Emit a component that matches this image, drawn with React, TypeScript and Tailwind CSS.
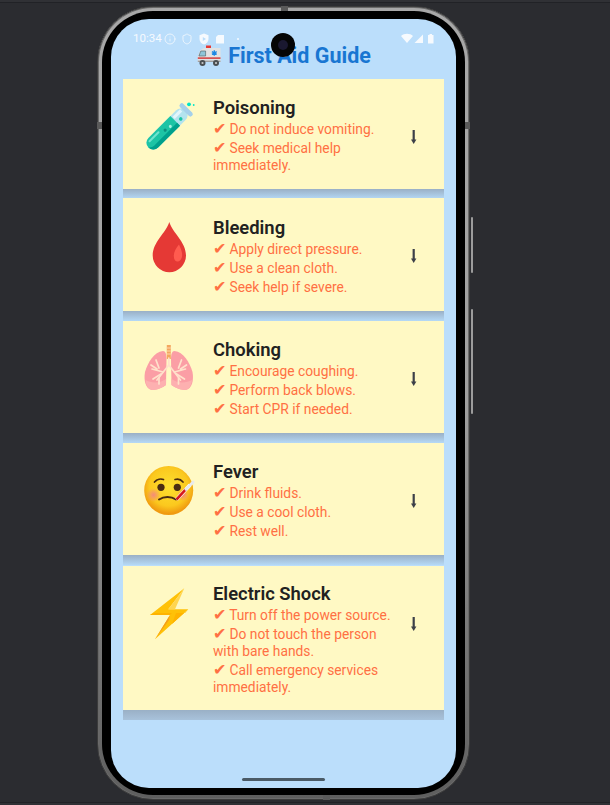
import { Info, Shield } from 'lucide-react'
import type { ReactNode } from 'react'

function TubeIcon() {
  return (
    <svg viewBox="0 0 60 60" className="h-[60px] w-[60px]">
      <circle cx="50" cy="7.3" r="1.9" fill="#00e5c8" />
      <circle cx="54.7" cy="8" r="0.9" fill="#00e5c8" />
      <g transform="translate(28 32) rotate(45) scale(1.05)">
        <rect x="-6.5" y="-25" width="13" height="50" rx="6.5" fill="#b3e3ee" />
        <path d="M-6.5 -11 H6.5 V18.5 A6.5 6.5 0 0 1 -6.5 18.5 Z" fill="#1cc4a5" />
        <path d="M2.6 -11 H6.5 V18.5 A6.5 6.5 0 0 1 0 25 A8 8 0 0 0 2.6 18 Z" fill="#00a08c" />
        <rect x="-4.5" y="7" width="2" height="14" rx="1" fill="#70e4cf" />
        <rect x="-4.5" y="-22" width="3" height="10" fill="#e3f5fa" />
        <rect x="-8" y="-28" width="16" height="4.5" rx="2.2" fill="#a5d0ea" />
        <circle cx="0.5" cy="-4" r="1.4" fill="#a4f0e0" />
        <circle cx="-0.5" cy="2" r="1.5" fill="#0d8f7f" />
        <circle cx="2.5" cy="-16" r="1.7" fill="#1cc4a5" />
      </g>
    </svg>
  )
}

function DropIcon() {
  return (
    <svg viewBox="0 0 60 60" className="h-[60px] w-[60px]">
      <path d="M30.3 6 C27 17 13.7 26 13.7 39.5 A16.6 16.6 0 0 0 47 39.5 C47 26 33.6 17 30.3 6 Z" fill="#e53935" />
      <path d="M40 28.5 C37 32 34.8 36 34.8 40 C34.8 44 37 46 39 45.5 C42 45 43.6 41 43 37 C42.6 34 41 31 40 28.5 Z" fill="#ff5b4f" />
    </svg>
  )
}

function LungsIcon() {
  return (
    <svg viewBox="0 0 60 60" className="h-[60px] w-[60px]">
      <path d="M24 12 C15 13 9 23 6 33 C4.5 41 6.5 50 13 51 C19 51 24 48 27 46 L27.5 20 C27.5 15 26.5 12 24 12 Z" fill="#fb9ea5" />
      <path d="M35.5 12 C44.5 13 50.5 23 53.5 33 C55 41 53 50 46.5 51 C40.5 51 35.5 48 32.5 46 L32 20 C32 15 33 12 35.5 12 Z" fill="#fb9ea5" />
      <path d="M6.5 41 C12 44 20 45 27 40 L27 46 C24 48 19 51 13 51 C9 50 7 46 6.5 41 Z" fill="#fdb0b0" />
      <path d="M53 41 C47.5 44 39.5 45 32.5 40 L32.5 46 C35.5 48 40.5 51 46.5 51 C50.5 50 52.5 46 53 41 Z" fill="#fdb0b0" />
      <rect x="27.8" y="6" width="4" height="14" fill="#f4a75e" />
      <path d="M27.8 9 h4 M27.8 12 h4 M27.8 15 h4" stroke="#ffd7ae" strokeWidth="1" />
      <g stroke="#ffe1cb" strokeWidth="1.7" strokeLinecap="round" fill="none">
        <path d="M29.8 19 V26 L18 41" />
        <path d="M29.8 26 L41.5 41" />
        <path d="M24 33 L13 30 M22 35 L14 40 M20 29 L17 21 M18 30 L12 26 M20 39 L20 45" />
        <path d="M35.5 33 L46.5 30 M37.5 35 L45.5 40 M39.5 29 L42.5 21 M41.5 30 L47.5 26 M39.5 39 L39.5 45" />
      </g>
    </svg>
  )
}

function FeverIcon() {
  return (
    <svg viewBox="0 0 60 60" className="h-[60px] w-[60px]">
      <defs>
        <radialGradient id="faceFill" cx="50%" cy="42%" r="55%">
          <stop offset="0%" stopColor="#fde030" />
          <stop offset="72%" stopColor="#fbc81e" />
          <stop offset="100%" stopColor="#f09a10" />
        </radialGradient>
        <radialGradient id="cheekFill">
          <stop offset="0%" stopColor="#f48a7c" />
          <stop offset="100%" stopColor="#f48a7c" stopOpacity="0" />
        </radialGradient>
      </defs>
      <circle cx="29.7" cy="29.5" r="24.5" fill="url(#faceFill)" />
      <circle cx="14.5" cy="34" r="7" fill="url(#cheekFill)" />
      <circle cx="44" cy="34" r="6" fill="url(#cheekFill)" />
      <circle cx="22" cy="26.3" r="3.6" fill="#4a2c12" />
      <circle cx="38.3" cy="26.3" r="3.6" fill="#4a2c12" />
      <path d="M15.5 21 C18 18 22 17.5 24.5 18.5 M36 18.5 C39 17.5 42 18.5 44 21" stroke="#4a2c12" strokeWidth="1.7" fill="none" strokeLinecap="round" />
      <path d="M20 38.5 C25 35 32 35 37 38.5" stroke="#4a2c12" strokeWidth="2" fill="none" strokeLinecap="round" />
      <path d="M37.5 38.5 L51 24" stroke="#fff" strokeWidth="3.6" />
      <path d="M37.5 38.5 L47 28.2" stroke="#d7191c" strokeWidth="2.6" />
      <path d="M47 28.2 L54 21.2" stroke="#e8eaec" strokeWidth="3" strokeLinecap="round" />
    </svg>
  )
}

function BoltIcon() {
  return (
    <svg viewBox="0 0 60 60" className="h-[60px] w-[60px]">
      <path d="M45.3 4.3 L11 31 H31 L16 55.3 L49.3 25.3 H29.3 Z" fill="#ffc107" />
      <path d="M45.3 4.3 L29.3 25.3 H36 Z" fill="#ffd54f" />
      <path d="M31 31 L16 55.3 L30 36 Z" fill="#f59d1c" />
      <path d="M11 31 L31 31 L33 29 H15 Z" fill="#ffb300" />
      <path d="M49.3 25.3 L33 40 L37 29 H46 Z" fill="#ffb300" />
    </svg>
  )
}

function AmbulanceIcon() {
  return (
    <svg viewBox="0 0 24 22" className="h-[22px] w-[24px]">
      <rect x="9" y="0.5" width="5" height="2.6" fill="#e53935" />
      <path d="M7 3 H23.5 V17 H0.8 V11.5 L3.5 5 Z" fill="#e2e2e2" />
      <path d="M3.8 6 H8.6 V11 H1.9 Z" fill="#8fc5d8" stroke="#4b5a60" strokeWidth="0.6" />
      <rect x="0.8" y="12.4" width="22.7" height="1.4" fill="#d32f2f" />
      <rect x="0.8" y="15.6" width="22.7" height="1.4" fill="#9e9e9e" />
      <path d="M17.3 5.2 v5.6 M14.9 6.6 l4.8 2.8 M14.9 9.4 l4.8 -2.8" stroke="#1e88e5" strokeWidth="1.3" />
      <circle cx="5.5" cy="18" r="3" fill="#4a4f52" />
      <circle cx="5.5" cy="18" r="1.1" fill="#c9c9c9" />
      <circle cx="19" cy="18" r="3" fill="#4a4f52" />
      <circle cx="19" cy="18" r="1.1" fill="#c9c9c9" />
    </svg>
  )
}

interface GuideCard {
  title: string
  steps: string[]
  icon: ReactNode
  box: string
  textTop: string
  shade: string
}

const cards: GuideCard[] = [
  {
    title: 'Poisoning',
    steps: ['Do not induce vomiting.', 'Seek medical help immediately.'],
    icon: <TubeIcon />,
    box: 'h-[110px] mb-[9px]',
    textTop: 'pt-[3px]',
    shade: 'to-[#b5d9f6]',
  },
  {
    title: 'Bleeding',
    steps: ['Apply direct pressure.', 'Use a clean cloth.', 'Seek help if severe.'],
    icon: <DropIcon />,
    box: 'h-[113px] mb-[10px]',
    textTop: 'pt-[4px]',
    shade: 'to-[#b5d9f6]',
  },
  {
    title: 'Choking',
    steps: ['Encourage coughing.', 'Perform back blows.', 'Start CPR if needed.'],
    icon: <LungsIcon />,
    box: 'h-[112px] mb-[10px]',
    textTop: 'pt-[3px]',
    shade: 'to-[#b5d9f6]',
  },
  {
    title: 'Fever',
    steps: ['Drink fluids.', 'Use a cool cloth.', 'Rest well.'],
    icon: <FeverIcon />,
    box: 'h-[112px] mb-[11px]',
    textTop: 'pt-[3px]',
    shade: 'to-[#b5d9f6]',
  },
  {
    title: 'Electric Shock',
    steps: ['Turn off the power source.', 'Do not touch the person with bare hands.', 'Call emergency services immediately.'],
    icon: <BoltIcon />,
    box: 'h-[144px]',
    textTop: 'pt-[2px]',
    shade: 'to-[#a8c2db]',
  },
]

function Card({ card }: { card: GuideCard }) {
  return (
    <article className={`relative flex items-start bg-[#fff9c4] pl-4 pt-[15px] ${card.box}`}>
      <div className="mr-[14px] mt-[3px] w-[60px] shrink-0">{card.icon}</div>
      <div className={`w-[185px] shrink-0 ${card.textTop}`}>
        <h2 className="text-[18.4px] font-semibold leading-[22px] text-[#212121]">{card.title}</h2>
        {card.steps.map((step) => (
          <p key={step} className="mt-[2px] text-[13.8px] leading-[17px] text-[#ff7043]">
            <span className="text-[15.5px] leading-none">✔</span> {step}
          </p>
        ))}
      </div>
      <svg viewBox="0 0 14 14" className="ml-[9px] mt-[36px] h-[14px] w-[14px] shrink-0">
        <path d="M6.7 0 V11" stroke="#3d4048" strokeWidth="2.2" />
        <path d="M4 9.5 H9.4 L6.7 14 Z" fill="#3d4048" />
      </svg>
      <div className={`absolute left-0 right-0 top-full h-[10px] bg-gradient-to-b from-[#9ab0c6] ${card.shade}`} />
    </article>
  )
}

function StatusBar() {
  return (
    <div className="absolute left-[22px] right-[22px] top-[13px] flex h-[14px] items-center text-[#f6fafe]">
      <span className="text-[11.5px] font-normal">10:34</span>
      <Info className="ml-[2px] h-[12px] w-[12px]" strokeWidth={1.6} />
      <Shield className="ml-[5px] h-[12px] w-[12px]" strokeWidth={1.6} />
      <svg viewBox="0 0 12 12" className="ml-[5px] h-[12px] w-[12px]">
        <path d="M6 0.5 L10.5 2.2 V6 C10.5 8.6 8.6 10.6 6 11.5 C3.4 10.6 1.5 8.6 1.5 6 V2.2 Z" fill="#f6fafe" />
        <path d="M4.8 4 L8 6 L4.8 8 Z" fill="#bbdefb" />
      </svg>
      <svg viewBox="0 0 10 10" className="ml-[5px] h-[10px] w-[10px]">
        <path d="M3 1 H9 V9.5 H1 V3 Z" fill="#f6fafe" />
      </svg>
      <span className="ml-[12px] h-[2.5px] w-[2.5px] rounded-full bg-[#f6fafe]" />
      <svg viewBox="0 0 34 12" className="ml-auto h-[12px] w-[34px]">
        <path d="M1 3 C4 0 10 0 13 3 L7 10 Z" fill="#f6fafe" />
        <path d="M14.5 10 L23 1.5 V10 Z" fill="#f6fafe" />
        <path d="M28 2 H29.5 V1 H32 V2 H33.5 V10.5 H28 Z" fill="#f6fafe" />
      </svg>
    </div>
  )
}

export default function App() {
  return (
    <div className="relative h-[805px] w-[610px] overflow-hidden bg-[#2b2c30] font-['Roboto',sans-serif]">
      <div className="h-[3px] border-b border-[#212226] bg-[#303135]" />
      <div className="relative ml-[97px] mt-[3px] h-[794px] w-[373px] rounded-[56px] border border-[#3c3c3c] bg-gradient-to-b from-[#a8a8a8] via-[#a0a0a0] to-[#5e5e5e] p-[4px] shadow-[inset_0_0_0_1px_#6a6a6a]">
        <div className="h-full w-full rounded-[51px] bg-black pb-[7px] pl-[9px] pr-[9px] pt-[8px]">
          <div className="relative flex h-[769px] w-[345px] flex-col overflow-hidden rounded-[38px] bg-[#bbdefb] px-3">
            <StatusBar />
            <div className="mt-[22px] flex h-[30px] items-center justify-center gap-[7px] pl-[1px]">
              <AmbulanceIcon />
              <h1 className="text-[21.5px] font-bold text-[#1976d2]">First Aid Guide</h1>
            </div>
            <div className="mt-[8px]">
              {cards.map((card) => (
                <Card key={card.title} card={card} />
              ))}
            </div>
            <div className="mb-[7px] mt-auto h-[3px] w-[83px] self-center rounded-full bg-[#4a5a66]" />
          </div>
        </div>
        <div className="absolute left-[173px] top-[26px] flex h-[24px] w-[24px] items-center justify-center rounded-full bg-[#050505]">
          <span className="h-[10px] w-[10px] rounded-full bg-[#1a1830]" />
        </div>
        <span className="absolute left-[183px] top-[-1px] h-[5px] w-[7px] bg-[#5a5a5a]" />
        <span className="absolute bottom-[-1px] left-[225px] h-[5px] w-[7px] bg-[#5a5a5a]" />
        <span className="absolute left-[-1px] top-[115px] h-[7px] w-[5px] bg-[#5a5a5a]" />
        <span className="absolute right-[-1px] top-[115px] h-[7px] w-[5px] bg-[#5a5a5a]" />
      </div>
      <span className="absolute left-[471px] top-[217px] h-[56px] w-[2px] rounded-sm bg-[#9c9c9c]" />
      <span className="absolute left-[471px] top-[309px] h-[105px] w-[2px] rounded-sm bg-[#9c9c9c]" />
      <div className="absolute bottom-0 left-0 h-[3px] w-full border-t border-[#212226] bg-[#303135]" />
    </div>
  )
}
